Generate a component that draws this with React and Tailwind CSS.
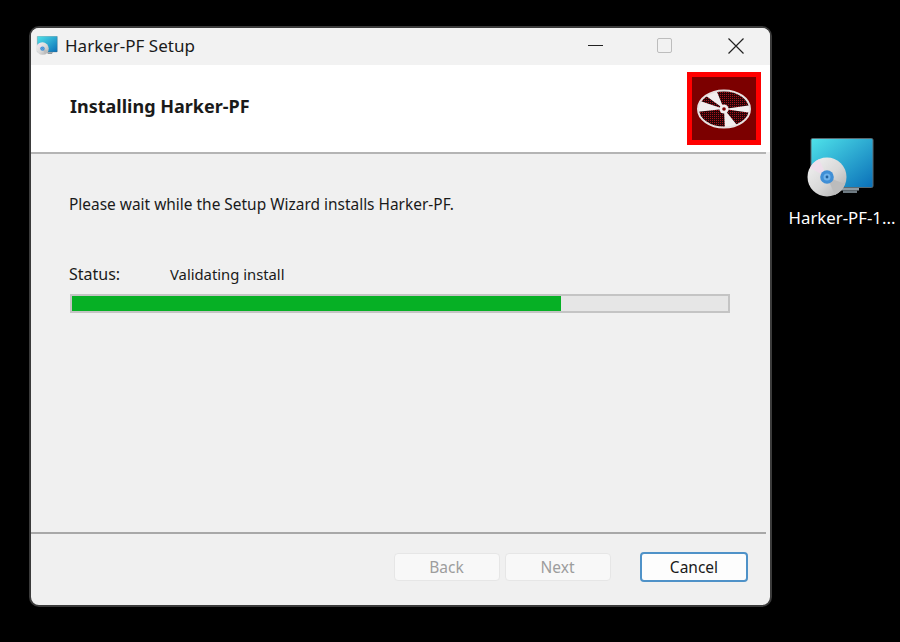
// small cd + monitor picture, used big on the desktop and small in the title bar
function SetupIcon({ className }) {
  return (
    <svg viewBox="0 0 68 62" className={className}>
      <defs>
        <linearGradient id="screen" x1="0" y1="0" x2="1" y2="1">
          <stop offset="0" stopColor="#4fe3ea" />
          <stop offset="1" stopColor="#0a6fb8" />
        </linearGradient>
        <linearGradient id="disc" x1="0" y1="0" x2="1" y2="1">
          <stop offset="0" stopColor="#f4f4f4" />
          <stop offset="0.55" stopColor="#d8d8d8" />
          <stop offset="1" stopColor="#a9a9a9" />
        </linearGradient>
      </defs>
      <rect x="4" y="0.5" width="62" height="49" rx="1.5" fill="url(#screen)" stroke="#5a6a72" strokeWidth="1" />
      <rect x="34" y="50" width="18" height="2.5" fill="#8f9ba3" />
      <path d="M36 52.5h14v2.5h-14z" fill="#6e7a82" />
      <circle cx="20" cy="39" r="19.5" fill="url(#disc)" />
      <path d="M20 39 L3 30 A19.5 19.5 0 0 1 12 21 Z" fill="#f0dcec" opacity="0.8" />
      <path d="M20 39 L38 46 A19.5 19.5 0 0 1 28 57 Z" fill="#bcbcbc" />
      <circle cx="20" cy="39" r="6.8" fill="#3f8fd6" />
      <circle cx="20" cy="39" r="3.5" fill="#6fb2ea" />
      <circle cx="20" cy="39" r="1.4" fill="#1f5f9c" />
    </svg>
  );
}

function HeaderLogo() {
  return (
    <div className="w-[74px] h-[73px] bg-[#7c0000] border-[5px] border-[#ff0000] flex items-center justify-center">
      <svg viewBox="0 0 56 42" className="w-[56px] h-[42px]">
        <defs>
          <pattern id="mesh" width="2" height="2" patternUnits="userSpaceOnUse">
            <rect width="2" height="2" fill="#260306" />
            <rect width="1" height="1" fill="#a5121a" />
          </pattern>
          <clipPath id="platter">
            <ellipse cx="28" cy="21" rx="26" ry="18.5" />
          </clipPath>
        </defs>
        <ellipse cx="28" cy="21" rx="26" ry="18.5" fill="url(#mesh)" />
        {/* white wedges all meet at the hub */}
        <g clipPath="url(#platter)" fill="#f2eeee">
          <polygon points="28,21 0,11.5 0,24" />
          <polygon points="28,21 6,5 19,-1" />
          <polygon points="28,21 29,42 45,42" />
          <polygon points="28,21 56,17 56,25" />
        </g>
        <ellipse cx="28" cy="21" rx="26" ry="18.5" fill="none" stroke="#e8e0e0" strokeWidth="2" />
        <circle cx="28" cy="21" r="4.6" fill="#f2eeee" />
        <circle cx="28" cy="21" r="1.8" fill="#7c0000" />
      </svg>
    </div>
  );
}

function WizardButton({ label, disabled }) {
  if (disabled) {
    return (
      <button className="w-[106px] h-[28px] pt-[1px] pr-[1px] rounded-[4px] border border-[#e6e6e6] bg-[#f8f8f8] text-[#9d9d9d] text-[15.5px]">
        {label}
      </button>
    );
  }
  return (
    <button className="w-[108px] h-[30px] pt-[1px] rounded-[4px] border-2 border-[#4f92c8] bg-[#fdfdfd] text-[#1a1a1a] text-[15.5px]">
      {label}
    </button>
  );
}

export default function App() {
  const progress = 74.5;

  return (
    <div className="w-[900px] h-[642px] bg-black overflow-hidden flex items-start font-['Noto_Sans','Open_Sans',sans-serif]">
      <div className="ml-[29px] mt-[26px] w-[743px] h-[581px] rounded-[10px] border-2 border-[#3b3b3b] bg-[#f0f0f0] overflow-hidden flex flex-col shrink-0">
        {/* title bar */}
        <div className="h-[37px] shrink-0 bg-[#f2f2f2] flex items-center pb-[2px]">
          <SetupIcon className="w-[22px] h-[20px] ml-[5px]" />
          <span className="ml-[7px] text-[17px] leading-[24px] text-[#1a1a1a]">Harker-PF Setup</span>
          <div className="ml-auto flex items-center">
            <svg viewBox="0 0 15 15" className="w-[15px] h-[15px] mr-[54px]">
              <path d="M0 7.5H15" stroke="#222222" strokeWidth="1" />
            </svg>
            <div className="w-[15px] h-[15px] rounded-[2px] border border-[#bdbdbd] mr-[56px]" />
            <svg viewBox="0 0 16 16" className="w-[16px] h-[16px] mr-[26px]">
              <path d="M0.5 0.5L15.5 15.5M15.5 0.5L0.5 15.5" stroke="#222222" strokeWidth="1.2" />
            </svg>
          </div>
        </div>

        {/* white header */}
        <div className="h-[87px] shrink-0 bg-white flex items-start">
          <h1 className="ml-[39px] mt-[29px] text-[18px] leading-[24px] font-bold text-[#1a1a1a]">Installing Harker-PF</h1>
          <div className="ml-auto mr-[9px] mt-[7px]">
            <HeaderLogo />
          </div>
        </div>
        <div className="h-[2px] shrink-0 mr-[4px] bg-[#b4b4b4]" />

        {/* body */}
        <div className="flex-1 flex flex-col pl-[38px]">
          <p className="mt-[40px] text-[15.45px] leading-[20px] text-[#1a1a1a]">
            Please wait while the Setup Wizard installs Harker-PF.
          </p>
          <div className="mt-[50px] flex text-[15px] leading-[20px] text-[#1a1a1a]">
            <span className="w-[101px] text-[16px]">Status:</span>
            <span className="text-[14.8px]">Validating install</span>
          </div>
          <div className="mt-[10px] ml-[1px] w-[660px] h-[19px] border-2 border-[#c4c4c4] bg-[#e6e6e6]">
            <div className="h-full bg-[#06b025]" style={{ width: `${progress}%` }} />
          </div>
        </div>

        {/* footer */}
        <div className="h-[2px] shrink-0 mr-[4px] bg-[#a8a8a8]" />
        <div className="h-[71px] shrink-0 flex items-start pt-[18px]">
          <div className="ml-[363px] mt-[1px] flex gap-[5px]">
            <WizardButton label="Back" disabled />
            <WizardButton label="Next" disabled />
          </div>
          <div className="ml-[29px]">
            <WizardButton label="Cancel" />
          </div>
        </div>
      </div>

      {/* desktop shortcut */}
      <div className="ml-[14px] mt-[138px] w-[112px] shrink-0 flex flex-col items-center text-white">
        <SetupIcon className="w-[68px] h-[62px] mr-[2px]" />
        <span className="mt-[7px] text-[16.8px] leading-[22px] whitespace-nowrap">Harker-PF-1...</span>
      </div>
    </div>
  );
}
